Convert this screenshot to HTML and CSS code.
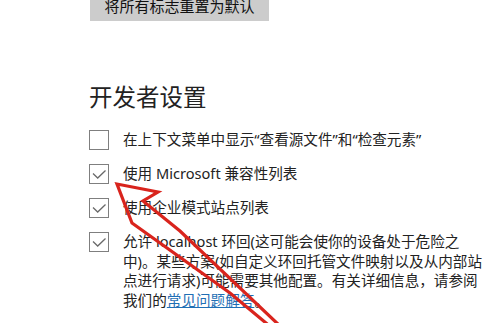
FILE: index.html
```html
<!DOCTYPE html>
<html lang="zh-CN">
<head>
<meta charset="utf-8">
<link rel="stylesheet" href="styles.css">
</head>
<body>
<div class="page">
  <div class="reset-btn">将所有标志重置为默认</div>
  <h2 class="section-title">开发者设置</h2>
  <div class="options">
    <div class="option">
      <span class="box"></span>
      <span class="label">在上下文菜单中显示“查看源文件”和“检查元素”</span>
    </div>
    <div class="option">
      <span class="box checked"><svg viewBox="0 0 20 20"><path d="M4 9.5 L8.7 14 L16.5 6.5"/></svg></span>
      <span class="label">使用 Microsoft 兼容性列表</span>
    </div>
    <div class="option">
      <span class="box checked"><svg viewBox="0 0 20 20"><path d="M4 9.5 L8.7 14 L16.5 6.5"/></svg></span>
      <span class="label">使用企业模式站点列表</span>
    </div>
    <div class="option">
      <span class="box checked"><svg viewBox="0 0 20 20"><path d="M4 9.5 L8.7 14 L16.5 6.5"/></svg></span>
      <span class="label">允许 localhost 环回(这可能会使你的设备处于危险之<br>中)。某些方案(如自定义环回托管文件映射以及从内部站<br>点进行请求)可能需要其他配置。有关详细信息，请参阅<br>我们的<a class="link" href="#">常见问题解答</a>。</span>
    </div>
  </div>
</div>
<svg class="arrow" width="495" height="323" viewBox="0 0 495 323">
  <polyline points="300,345 180,231 143,201 158,192 117,184 132,223 230,293 290,343"/>
</svg>
</body>
</html>
```
FILE: styles.css
```css
html, body {
  margin: 0;
  padding: 0;
  background: #ffffff;
  overflow: hidden;
  width: 495px;
  height: 323px;
}

body {
  font-family: "Noto Sans", "Noto Sans CJK SC", sans-serif;
  color: #222222;
  position: relative;
}

.page {
  padding-left: 89px;
}

.reset-btn {
  margin-left: 1px;
  width: 179px;
  height: 21px;
  background: #cccccc;
  color: #111111;
  font-family: "Noto Sans CJK SC", sans-serif;
  font-size: 15px;
  line-height: 12px;
  text-align: center;
  white-space: nowrap;
  overflow: hidden;
}

.section-title {
  margin: 59px 0 18px 0;
  font-family: "Noto Sans CJK SC", sans-serif;
  font-weight: 400;
  font-size: 23.5px;
  line-height: 32px;
  color: #222222;
}

.options {
  display: flex;
  flex-direction: column;
  gap: 14px;
}

.option {
  display: flex;
  align-items: flex-start;
  gap: 14px;
}

.box {
  flex: none;
  width: 20px;
  height: 20px;
  box-sizing: border-box;
  border: 1.6px solid #7f7f7f;
  display: flex;
  align-items: center;
  justify-content: center;
}

.box svg {
  width: 20px;
  height: 20px;
  flex: none;
}

.box svg path {
  fill: none;
  stroke: #6a6a6a;
  stroke-width: 1.3;
}

.label {
  font-size: 14.6px;
  line-height: 19.7px;
  white-space: nowrap;
}

.link {
  color: #1f6fb5;
  text-decoration: underline;
}

.arrow {
  position: absolute;
  left: 0;
  top: 0;
  pointer-events: none;
}

.arrow polyline {
  fill: none;
  stroke: #d9241d;
  stroke-width: 3.2;
  stroke-linejoin: miter;
}
```
